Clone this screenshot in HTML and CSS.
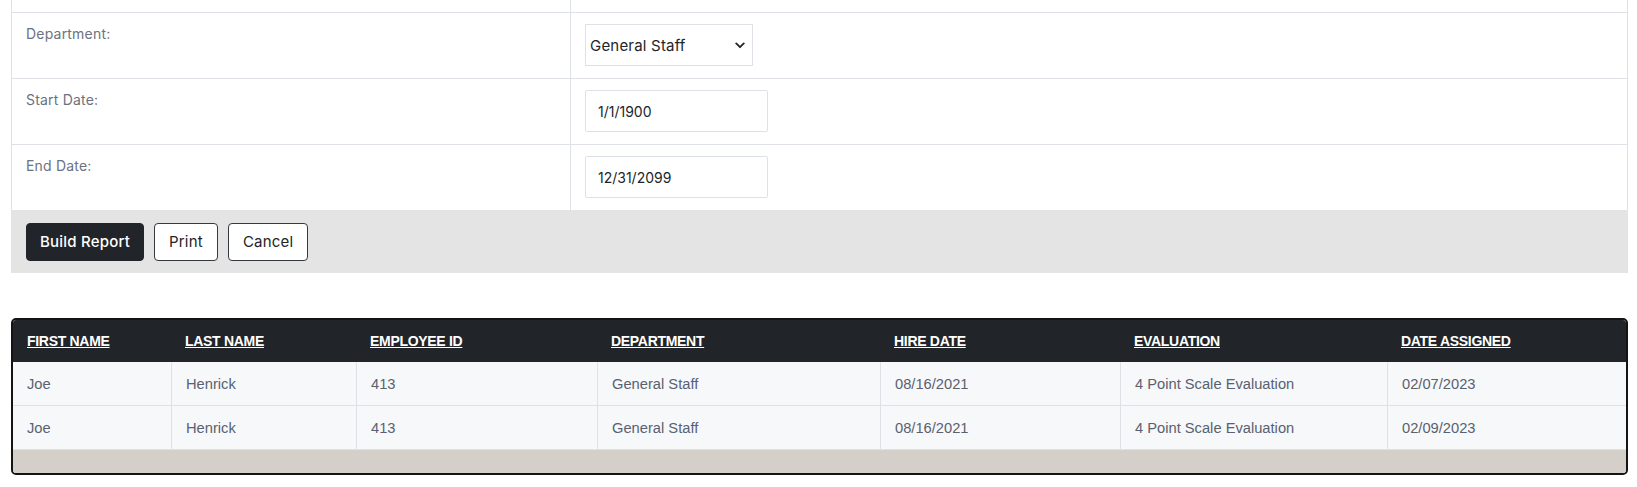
FILE: index.html
```html
<!DOCTYPE html>
<html lang="en">
<head>
<meta charset="utf-8">
<title>Evaluation Report</title>
<link rel="stylesheet" href="styles.css">
</head>
<body>
<div class="page">
  <div class="form-panel">
    <div class="form-row stub">
      <div class="label-cell"></div>
      <div class="value-cell"></div>
    </div>
    <div class="form-row">
      <div class="label-cell"><label for="dept">Department:</label></div>
      <div class="value-cell">
        <span class="select-wrap">
          <select id="dept" class="field select">
            <option>General Staff</option>
          </select>
          <svg class="chevron" viewBox="0 0 12 8" width="10" height="7" aria-hidden="true"><path d="M1.5 1.5 L6 6 L10.5 1.5" fill="none" stroke="#212529" stroke-width="2.2" stroke-linecap="round" stroke-linejoin="round"/></svg>
        </span>
      </div>
    </div>
    <div class="form-row">
      <div class="label-cell"><label for="start">Start Date:</label></div>
      <div class="value-cell"><input id="start" class="field input" type="text" value="1/1/1900"></div>
    </div>
    <div class="form-row last">
      <div class="label-cell"><label for="end">End Date:</label></div>
      <div class="value-cell"><input id="end" class="field input" type="text" value="12/31/2099"></div>
    </div>
    <div class="button-bar">
      <button class="btn btn-dark" type="button">Build Report</button>
      <button class="btn btn-outline" type="button">Print</button>
      <button class="btn btn-outline" type="button">Cancel</button>
    </div>
  </div>

  <div class="table-wrap">
    <table class="report">
      <colgroup>
        <col class="c1"><col class="c2"><col class="c3"><col class="c4"><col class="c5"><col class="c6"><col class="c7">
      </colgroup>
      <thead>
        <tr>
          <th><a href="#">FIRST NAME</a></th>
          <th><a href="#">LAST NAME</a></th>
          <th><a href="#">EMPLOYEE ID</a></th>
          <th><a href="#">DEPARTMENT</a></th>
          <th><a href="#">HIRE DATE</a></th>
          <th><a href="#">EVALUATION</a></th>
          <th><a href="#">DATE ASSIGNED</a></th>
        </tr>
      </thead>
      <tbody>
        <tr>
          <td>Joe</td><td>Henrick</td><td>413</td><td>General Staff</td><td>08/16/2021</td><td>4 Point Scale Evaluation</td><td>02/07/2023</td>
        </tr>
        <tr>
          <td>Joe</td><td>Henrick</td><td>413</td><td>General Staff</td><td>08/16/2021</td><td>4 Point Scale Evaluation</td><td>02/09/2023</td>
        </tr>
      </tbody>
      <tfoot>
        <tr><td colspan="7"></td></tr>
      </tfoot>
    </table>
  </div>
</div>
</body>
</html>
```

FILE: styles.css
```css
html, body {
  margin: 0;
  padding: 0;
  background: #ffffff;
}

.page {
  padding: 0 9px 0 11px;
  font-family: "Inter", "Noto Sans", sans-serif;
}

.form-panel {
  display: flex;
  flex-direction: column;
}

.form-row {
  display: grid;
  grid-template-columns: 559px 1fr;
  border-left: 1px solid #dee2e6;
  border-right: 1px solid #dee2e6;
  border-bottom: 1px solid #dee2e6;
  background: #fff;
}

.form-row.last {
  border-bottom: none;
}

.form-row.stub {
  height: 12px;
}

.label-cell {
  border-right: 1px solid #dee2e6;
  padding: 10px 14px 0 14px;
}

.label-cell label {
  font-size: 14px;
  letter-spacing: 0.2px;
  line-height: 18px;
  color: #6b7280;
}

.value-cell {
  padding: 11px 14px 12px 14px;
  display: flex;
  align-items: flex-start;
}

.stub .label-cell,
.stub .value-cell {
  padding: 0;
}

.field {
  box-sizing: border-box;
  height: 42px;
  border: 1px solid #dee2e6;
  border-radius: 2px;
  background: #fff;
  color: #212529;
  font-family: "Inter", "Noto Sans", sans-serif;
  font-size: 14px;
  outline: none;
  margin: 0;
}

.select-wrap {
  position: relative;
  display: inline-flex;
}

.select {
  width: 168px;
  padding: 0 24px 0 4px;
  font-size: 15px;
  letter-spacing: 0.2px;
  appearance: none;
  -webkit-appearance: none;
  border-radius: 0;
}

.chevron {
  position: absolute;
  right: 8px;
  top: 18px;
  pointer-events: none;
}

.input {
  width: 183px;
  padding: 0 12px;
}

.button-bar {
  background: #e4e4e4;
  padding: 13px 15px 12px 15px;
  display: flex;
  gap: 10px;
}

.btn {
  box-sizing: border-box;
  height: 38px;
  border-radius: 4px;
  font-family: "Inter", "Noto Sans", sans-serif;
  font-size: 15px;
  letter-spacing: 0.2px;
  padding: 0 14px 2px 14px;
  cursor: pointer;
}

.btn-dark {
  background: #212529;
  color: #fff;
  border: 1px solid #212529;
  font-weight: 500;
  width: 118px;
  padding: 0 0 2px 0;
}

.btn-outline {
  background: #fff;
  color: #212529;
  border: 1px solid #343a40;
}

.table-wrap {
  margin-top: 45px;
  border: 2px solid #141414;
  border-radius: 5px;
  overflow: hidden;
}

.report {
  width: 100%;
  table-layout: fixed;
  border-collapse: separate;
  border-spacing: 0;
  font-family: "Liberation Sans", Arial, sans-serif;
}

.c1 { width: 158px; }
.c2 { width: 185px; }
.c3 { width: 241px; }
.c4 { width: 283px; }
.c5 { width: 240px; }
.c6 { width: 267px; }
.c7 { width: 239px; }

.report th {
  background: #212529;
  height: 42px;
  padding: 0 14px;
  text-align: left;
  vertical-align: middle;
  font-size: 14px;
  line-height: 16px;
  font-weight: bold;
  letter-spacing: -0.3px;
}

.report th a {
  color: #fff;
  text-decoration: underline;
}

.report tbody td {
  background: #f7f8fa;
  height: 43px;
  padding: 0 14px;
  font-size: 14.7px;
  color: #596170;
  border-bottom: 1px solid #dee2e6;
  border-left: 1px solid #dee2e6;
}

.report tbody td:first-child {
  border-left: none;
}

.report tfoot td {
  background: #d4d0c9;
  height: 23px;
  padding: 0;
}
```
